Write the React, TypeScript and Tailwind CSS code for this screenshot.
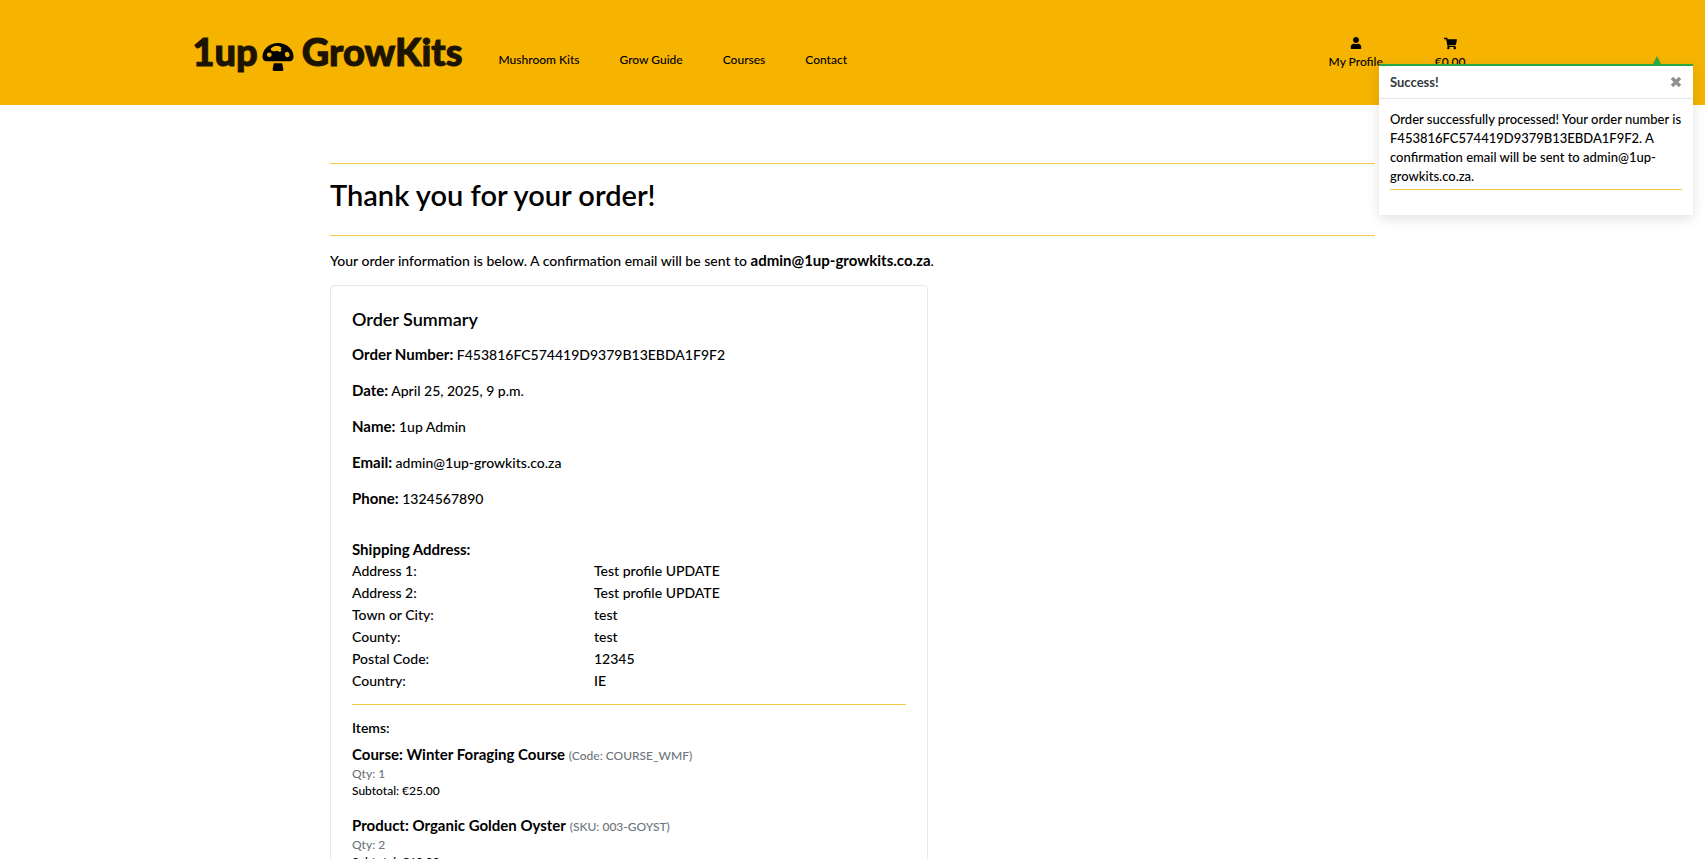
import React from "react";
import { FaShoppingCart, FaUser } from "react-icons/fa";

const navLinks = ["Mushroom Kits", "Grow Guide", "Courses", "Contact"];

const details = [
  ["Order Number:", "F453816FC574419D9379B13EBDA1F9F2"],
  ["Date:", "April 25, 2025, 9 p.m."],
  ["Name:", "1up Admin"],
  ["Email:", "admin@1up-growkits.co.za"],
  ["Phone:", "1324567890"],
];

const address = [
  ["Address 1:", "Test profile UPDATE"],
  ["Address 2:", "Test profile UPDATE"],
  ["Town or City:", "test"],
  ["County:", "test"],
  ["Postal Code:", "12345"],
  ["Country:", "IE"],
];

const items = [
  { name: "Course: Winter Foraging Course", code: "(Code: COURSE_WMF)", qty: 1, subtotal: "€25.00" },
  { name: "Product: Organic Golden Oyster", code: "(SKU: 003-GOYST)", qty: 2, subtotal: "€60.00" },
];

function Mushroom() {
  return (
    <svg viewBox="0 0 32 28" className="mt-3 h-7 w-8 text-black" aria-hidden="true">
      <path
        fill="currentColor"
        d="M16 0C25 0 31.500 6.500 31.500 13.500C31.500 16.500 30 18.300 27.500 18.300H4.500C2 18.300 .5 16.500 .5 13.500C.5 6.500 7 0 16 0Z"
      />
      <path fill="currentColor" d="M11.800 20.300H20.200L21.300 26C21.500 27.300 21 28 20 28H12C11 28 10.500 27.300 10.700 26Z" />
      <g fill="#f6b300">
        <ellipse cx="14" cy="5.600" rx="5.400" ry="2.500" transform="rotate(-8 14 5.600)" />
        <ellipse cx="7.300" cy="11.700" rx="2.400" ry="2.200" />
        <ellipse cx="25.200" cy="11.500" rx="2.300" ry="2.600" transform="rotate(-20 25.200 11.500)" />
        <ellipse cx="17.500" cy="7.300" rx="1.800" ry="1.500" />
      </g>
    </svg>
  );
}

function Toast() {
  return (
    <div role="status" className="absolute top-16 right-3 w-[314px] text-[13px]">
      <div className="absolute -top-2 right-8 h-2 w-2 bg-[#28a745] [clip-path:polygon(50%_0,100%_100%,0_100%)]" />
      <div className="border-t-2 border-[#28a745] bg-white shadow-[0_4px_12px_rgba(0,0,0,0.12)]">
        <div className="flex h-[33px] items-center justify-between border-b border-gray-200 px-[11px]">
          <strong className="text-[#343a40]">Success!</strong>
          <button type="button" aria-label="Close" className="text-[#8f8f8f]">
            <svg viewBox="0 0 12 12" className="h-3 w-3" aria-hidden="true">
              <path d="M2 2L10 10M10 2L2 10" stroke="currentColor" strokeWidth="3.400" />
            </svg>
          </button>
        </div>
        <div className="px-[11px] pt-[11px] pb-[25px]">
          <p className="border-b border-[#f6c544] pb-[3px] leading-[19px]">
            Order successfully processed! Your order number is F453816FC574419D9379B13EBDA1F9F2. A confirmation
            email will be sent to admin@1up-growkits.co.za.
          </p>
        </div>
      </div>
    </div>
  );
}

export default function App() {
  return (
    <div className="relative h-screen overflow-y-auto bg-white font-['Lato',sans-serif] text-[14px] leading-[22px] font-medium text-black [scrollbar-width:none]">
      <header className="bg-[#f6b300]">
        <div className="mx-auto flex h-[105px] max-w-[1320px] items-center">
          <a
            href="#"
            className="flex items-center gap-1 pb-1 text-[38px] leading-10 font-black text-[#1c1400] [-webkit-text-stroke:1px_#1c1400]"
          >
            <span>1up</span>
            <Mushroom />
            <span className="pl-1">GrowKits</span>
          </a>
          <nav className="ml-9 flex gap-10 pt-[14px] text-[12px]">
            {navLinks.map((label) => (
              <a key={label} href="#">{label}</a>
            ))}
          </nav>
          <div className="mr-[47px] ml-auto flex gap-[52px] text-[12px] leading-5">
            <a href="#" className="flex flex-col items-center gap-[3px] pt-1">
              <FaUser size={12} />
              My Profile
            </a>
            <a href="#" className="flex flex-col items-center gap-[2px] pt-1">
              <FaShoppingCart size={13} />
              €0.00
            </a>
          </div>
        </div>
      </header>

      <main className="mx-auto max-w-[1045px] pt-[58px]">
        <h1 className="border-y border-[#f6c544] pt-[11px] pb-[21px] text-[29px] leading-[39px] font-semibold">
          Thank you for your order!
        </h1>
        <p className="py-[13px]">
          Your order information is below. A confirmation email will be sent to{" "}
          <strong className="text-[15px]">admin@1up-growkits.co.za</strong>.
        </p>
        <section className="max-w-[598px] rounded border border-gray-200 px-[21px] pt-[21px] pb-6">
          <h2 className="mb-3 text-[18px] leading-6 font-semibold">Order Summary</h2>
          {details.map(([label, value]) => (
            <p key={label} className="mb-[13px]">
              <strong className="text-[15px]">{label}</strong> {value}
            </p>
          ))}
          <h3 className="mt-7 text-[15px] font-bold">Shipping Address:</h3>
          <dl>
            {address.map(([label, value]) => (
              <div key={label} className="flex">
                <dt className="w-[242px]">{label}</dt>
                <dd>{value}</dd>
              </div>
            ))}
          </dl>
          <hr className="mt-3 mb-3 border-[#f6c544]" />
          <h3 className="mb-1 font-semibold">Items:</h3>
          <ul>
            {items.map((item) => (
              <li key={item.name} className="mb-[15px] text-[12px] leading-[17px]">
                <p className="text-[15px] leading-[22px]">
                  <strong>{item.name}</strong>{" "}
                  <span className="text-[12px] leading-none text-[#6c757d]">{item.code}</span>
                </p>
                <p className="text-[#6c757d]">Qty: {item.qty}</p>
                <p>Subtotal: {item.subtotal}</p>
              </li>
            ))}
          </ul>
        </section>
      </main>
      <Toast />
    </div>
  );
}
